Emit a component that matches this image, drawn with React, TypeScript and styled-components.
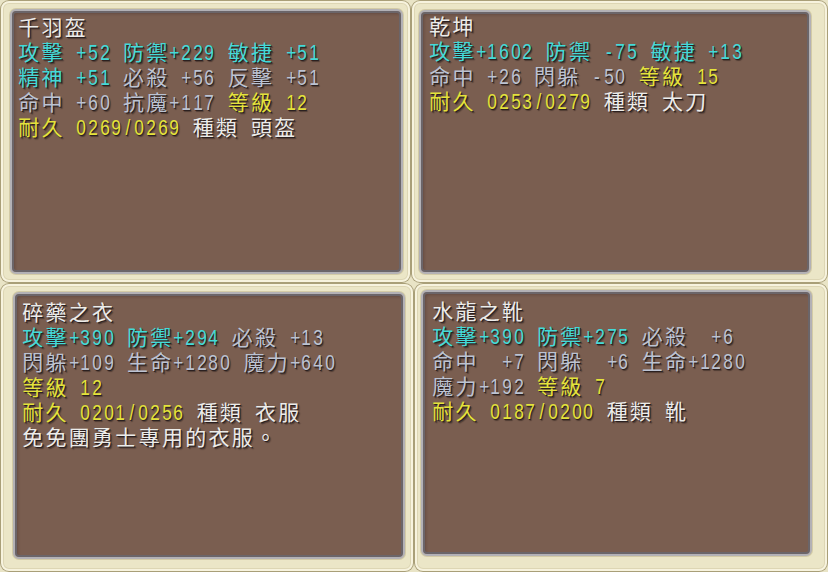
import styled, { createGlobalStyle } from "styled-components";

type Tone = "white" | "cyan" | "gray" | "yellow";
type Seg = [Tone, string];
type Inset = [number, number, number, number]; // top right bottom left

const tones: Record<Tone, string> = {
  white: "#ececea",
  cyan: "#44dad8",
  gray: "#bcc3d2",
  yellow: "#e4e33c",
};

const CELL = 11.65;

const GlobalStyle = createGlobalStyle`
  html, body {
    margin: 0;
    padding: 0;
    background: #e9e4c6;
  }
  body {
    width: 828px;
    height: 572px;
    overflow: hidden;
  }
`;

const Board = styled.div`
  display: flex;
  flex-direction: column;
  width: 828px;
  height: 572px;
`;

const Row = styled.div<{ $h: number }>`
  display: flex;
  height: ${(p) => p.$h}px;
`;

const Frame = styled.div<{ $w: number; $inset: Inset }>`
  box-sizing: border-box;
  width: ${(p) => p.$w}px;
  height: 100%;
  padding: ${(p) => p.$inset.map((v) => v - 4 + "px").join(" ")};
  background: #ebe6c7;
  border-radius: 9px;
  box-shadow: inset 0 0 0 1px #a99f78, inset 0 0 0 3px #f7f3de,
    inset 0 0 0 4px #ddd6b4;
`;

const Well = styled.div<{ $padTop: number; $padLeft: number }>`
  box-sizing: border-box;
  height: 100%;
  background: #7a5e50;
  border: 2px solid #b3b1b5;
  border-radius: 6px;
  box-shadow: inset 0 0 0 2px #6b6569, inset 3px 3px 3px rgba(40, 25, 20, 0.25),
    0 0 0 1px #d3cba6;
  padding: ${(p) => p.$padTop}px 0 0 ${(p) => p.$padLeft}px;
  overflow: hidden;
`;

const Line = styled.div`
  height: 25px;
  font-family: "Noto Sans CJK TC", sans-serif;
  font-size: 21px;
  line-height: 25px;
  white-space: nowrap;
`;

// the game's bitmap font: wide cells for CJK, half cells for digits and signs.
// Liberation Sans leads the stack so the text boxes stay inside one 25px row;
// the CJK glyphs themselves come from Noto Sans CJK TC.
const Glyph = styled.span<{ $wide: boolean; $tone: Tone }>`
  display: inline-block;
  width: ${(p) => (p.$wide ? CELL * 2 : CELL)}px;
  line-height: 18px;
  vertical-align: baseline;
  text-align: center;
  color: ${(p) => tones[p.$tone]};
  font-family: "Liberation Sans", "Noto Sans CJK TC", sans-serif;
  font-size: ${(p) => (p.$wide ? 21 : 21.6)}px;
  transform: ${(p) => (p.$wide ? "none" : "scaleX(0.8)")};
  text-shadow: 1px 1px 0 #2b2020, 2px 2px 1px rgba(30, 20, 18, 0.45);
`;

const isWide = (ch: string) => ch.charCodeAt(0) > 0x2e80;

const TextLine = ({ segs }: { segs: Seg[] }) => (
  <Line>
    {segs.map(([tone, text], i) =>
      Array.from(text).map((ch, j) => (
        <Glyph key={i + "-" + j} $wide={isWide(ch)} $tone={tone}>
          {ch === " " ? "\u00a0" : ch}
        </Glyph>
      ))
    )}
  </Line>
);

type PanelData = {
  w: number;
  inset: Inset;
  padTop: number;
  padLeft: number;
  lines: Seg[][];
};

const top: PanelData[] = [
  {
    w: 411,
    inset: [13, 12, 13, 14],
    padTop: 3,
    padLeft: 5,
    lines: [
      [["white", "千羽盔"]],
      [["cyan", "攻擊 +52 防禦+229 敏捷 +51"]],
      [["cyan", "精神 +51 "], ["gray", "必殺 +56 反擊 +51"]],
      [["gray", "命中 +60 抗魔+117 "], ["yellow", "等級 12"]],
      [["yellow", "耐久 0269/0269 "], ["white", "種類 頭盔"]],
    ],
  },
  {
    w: 417,
    inset: [14, 21, 13, 12],
    padTop: 1,
    padLeft: 7,
    lines: [
      [["white", "乾坤"]],
      [["cyan", "攻擊+1602 防禦 -75 敏捷 +13"]],
      [["gray", "命中 +26 閃躲 -50 "], ["yellow", "等級 15"]],
      [["yellow", "耐久 0253/0279 "], ["white", "種類 太刀"]],
    ],
  },
];

const bottom: PanelData[] = [
  {
    w: 414,
    inset: [13, 13, 17, 17],
    padTop: 5,
    padLeft: 6,
    lines: [
      [["white", "碎藥之衣"]],
      [["cyan", "攻擊+390 防禦+294 "], ["gray", "必殺 +13"]],
      [["gray", "閃躲+109 生命+1280 魔力+640"]],
      [["yellow", "等級 12"]],
      [["yellow", "耐久 0201/0256 "], ["white", "種類 衣服"]],
      [["white", "免免團勇士專用的衣服。"]],
    ],
  },
  {
    w: 414,
    inset: [11, 20, 20, 11],
    padTop: 6,
    padLeft: 8,
    lines: [
      [["white", "水龍之靴"]],
      [["cyan", "攻擊+390 防禦+275 "], ["gray", "必殺  +6"]],
      [["gray", "命中  +7 閃躲  +6 生命+1280"]],
      [["gray", "魔力+192 "], ["yellow", "等級 7"]],
      [["yellow", "耐久 0187/0200 "], ["white", "種類 靴"]],
    ],
  },
];

const Panel = ({ data }: { data: PanelData }) => (
  <Frame $w={data.w} $inset={data.inset}>
    <Well $padTop={data.padTop} $padLeft={data.padLeft}>
      {data.lines.map((segs, i) => (
        <TextLine key={i} segs={segs} />
      ))}
    </Well>
  </Frame>
);

export default function App() {
  return (
    <>
      <GlobalStyle />
      <Board>
        <Row $h={283}>
          {top.map((p, i) => (
            <Panel key={i} data={p} />
          ))}
        </Row>
        <Row $h={289}>
          {bottom.map((p, i) => (
            <Panel key={i} data={p} />
          ))}
        </Row>
      </Board>
    </>
  );
}
